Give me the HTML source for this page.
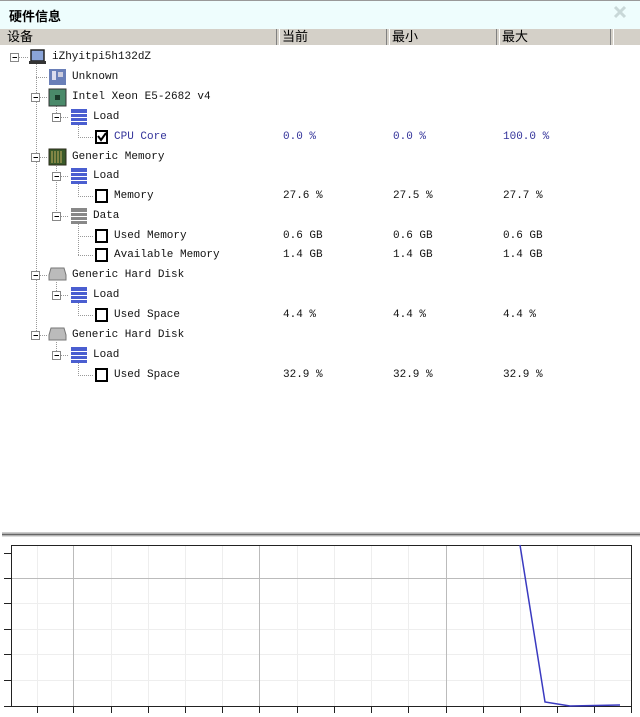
<!DOCTYPE html>
<html><head><meta charset="utf-8"><style>
body{margin:0;width:640px;height:717px;overflow:hidden;background:#fff;position:relative;font-family:"Liberation Mono","Noto Sans CJK SC",monospace;}
.title{position:absolute;left:0;top:0;width:640px;height:28px;background:#eefdfd;border-top:1px solid #999;}
.title span{position:absolute;left:9px;top:5px;font:bold 13px "Liberation Sans","Noto Sans CJK SC",sans-serif;color:#000;}
.hdr{position:absolute;left:0;top:29px;width:640px;height:16px;background:#d4d0c8;border-bottom:1px solid #fff;}
.hdr div{position:absolute;top:0;height:16px;font:13px "Liberation Sans","Noto Sans CJK SC",sans-serif;line-height:16px;color:#000;}
.sep{position:absolute;top:29px;width:2px;height:16px;border-left:1px solid #808080;border-right:1px solid #fff;}
.t{position:absolute;font-size:11px;line-height:14px;color:#111;white-space:pre;}
.b{color:#33339a;}
</style></head><body>
<div class="title"><span>硬件信息</span>
<svg style="position:absolute;left:612px;top:4px" width="16" height="14"><path d="M3 2L13 12M13 2L3 12" stroke="#c8d8d8" stroke-width="3"/></svg></div>
<div class="hdr"><div style="left:7px">设备</div><div style="left:282px">当前</div><div style="left:392px">最小</div><div style="left:502px">最大</div></div>
<div class="sep" style="left:276px"></div><div class="sep" style="left:386px"></div><div class="sep" style="left:496px"></div><div class="sep" style="left:610px"></div>

<svg style="position:absolute;left:0;top:0" width="640" height="400">
<g stroke="#999" stroke-dasharray="1,1" fill="none">
<line x1="36.5" y1="64" x2="36.5" y2="335"/>
<line x1="19" y1="57.5" x2="29" y2="57.5"/>
<line x1="36" y1="77.5" x2="48" y2="77.5"/>
<line x1="40" y1="97.5" x2="48" y2="97.5"/>
<line x1="40" y1="157.5" x2="48" y2="157.5"/>
<line x1="40" y1="275.5" x2="48" y2="275.5"/>
<line x1="40" y1="335.5" x2="48" y2="335.5"/>
<line x1="56.5" y1="104" x2="56.5" y2="117"/>
<line x1="56.5" y1="164" x2="56.5" y2="216"/>
<line x1="56.5" y1="282" x2="56.5" y2="295"/>
<line x1="56.5" y1="342" x2="56.5" y2="355"/>
<line x1="61" y1="117.5" x2="69" y2="117.5"/>
<line x1="61" y1="176.5" x2="69" y2="176.5"/>
<line x1="61" y1="216.5" x2="69" y2="216.5"/>
<line x1="61" y1="295.5" x2="69" y2="295.5"/>
<line x1="61" y1="355.5" x2="69" y2="355.5"/>
<line x1="78.5" y1="125" x2="78.5" y2="137"/><line x1="78" y1="137.5" x2="93" y2="137.5"/>
<line x1="78.5" y1="184" x2="78.5" y2="196"/><line x1="78" y1="196.5" x2="93" y2="196.5"/>
<line x1="78.5" y1="224" x2="78.5" y2="255"/><line x1="78" y1="236.5" x2="93" y2="236.5"/><line x1="78" y1="255.5" x2="93" y2="255.5"/>
<line x1="78.5" y1="303" x2="78.5" y2="315"/><line x1="78" y1="315.5" x2="93" y2="315.5"/>
<line x1="78.5" y1="363" x2="78.5" y2="375"/><line x1="78" y1="375.5" x2="93" y2="375.5"/>
</g>
<g fill="#fff" stroke="#888">
<rect x="10.5" y="53.5" width="8" height="8"/>
<rect x="31.5" y="93.5" width="8" height="8"/><rect x="31.5" y="153.5" width="8" height="8"/>
<rect x="31.5" y="271.5" width="8" height="8"/><rect x="31.5" y="331.5" width="8" height="8"/>
<rect x="52.5" y="113.5" width="8" height="8"/><rect x="52.5" y="172.5" width="8" height="8"/>
<rect x="52.5" y="212.5" width="8" height="8"/><rect x="52.5" y="291.5" width="8" height="8"/><rect x="52.5" y="351.5" width="8" height="8"/>
</g>
<g stroke="#000"><line x1="12.5" y1="57.5" x2="17" y2="57.5"/><line x1="33.5" y1="97.5" x2="38" y2="97.5"/><line x1="33.5" y1="157.5" x2="38" y2="157.5"/><line x1="33.5" y1="275.5" x2="38" y2="275.5"/><line x1="33.5" y1="335.5" x2="38" y2="335.5"/><line x1="54.5" y1="117.5" x2="59" y2="117.5"/><line x1="54.5" y1="176.5" x2="59" y2="176.5"/><line x1="54.5" y1="216.5" x2="59" y2="216.5"/><line x1="54.5" y1="295.5" x2="59" y2="295.5"/><line x1="54.5" y1="355.5" x2="59" y2="355.5"/></g>
<!-- root computer -->
<rect x="31" y="50" width="13" height="11" fill="#8aa4d8" stroke="#222" stroke-width="1.5"/><rect x="29" y="61" width="17" height="3" fill="#333"/>
<!-- unknown motherboard -->
<rect x="49" y="69" width="17" height="16" fill="#6a7fb8"/><rect x="52" y="71" width="4" height="9" fill="#dde"/><rect x="58" y="72" width="5" height="5" fill="#ccd"/>
<!-- cpu -->
<rect x="49" y="89" width="17" height="17" fill="#4a8a6a" stroke="#333"/><rect x="55" y="95" width="5" height="5" fill="#1a3a2a"/>
<!-- memory -->
<rect x="49" y="149" width="17" height="16" fill="#3a5a2a" stroke="#2a2a1a"/><g stroke="#c8b060"><line x1="52" y1="151" x2="52" y2="163"/><line x1="55" y1="151" x2="55" y2="163"/><line x1="58" y1="151" x2="58" y2="163"/><line x1="61" y1="151" x2="61" y2="163"/></g>
<!-- disks -->
<path d="M51 268h13l2 7v5h-17v-5z" fill="#bbb" stroke="#777"/><path d="M51 328h13l2 7v5h-17v-5z" fill="#bbb" stroke="#777"/>
<!-- load bars -->
<g fill="#4a5ed0"><rect x="71" y="109" width="16" height="16"/><rect x="71" y="168" width="16" height="16"/><rect x="71" y="287" width="16" height="16"/><rect x="71" y="347" width="16" height="16"/></g>
<rect x="71" y="208" width="16" height="16" fill="#888"/>
<g stroke="#fff" stroke-width="1"><path d="M71 113.5h16M71 117.5h16M71 121.5h16M71 172.5h16M71 176.5h16M71 180.5h16M71 212.5h16M71 216.5h16M71 220.5h16M71 291.5h16M71 295.5h16M71 299.5h16M71 351.5h16M71 355.5h16M71 359.5h16"/></g>
<!-- checkboxes -->
<g fill="#fff" stroke="#000" stroke-width="2"><rect x="96" y="131" width="11" height="12"/><rect x="96" y="190" width="11" height="12"/><rect x="96" y="230" width="11" height="12"/><rect x="96" y="249" width="11" height="12"/><rect x="96" y="309" width="11" height="12"/><rect x="96" y="369" width="11" height="12"/></g>
<path d="M98 136l3 4 5-7" stroke="#000" stroke-width="2" fill="none"/>
</svg>

<div class="t" style="left:52px;top:50px">iZhyitpi5h132dZ</div>
<div class="t" style="left:72px;top:70px">Unknown</div>
<div class="t" style="left:72px;top:90px">Intel Xeon E5-2682 v4</div>
<div class="t" style="left:93px;top:110px">Load</div>
<div class="t b" style="left:114px;top:130px">CPU Core</div><div class="t b" style="left:283px;top:130px">0.0 %</div><div class="t b" style="left:393px;top:130px">0.0 %</div><div class="t b" style="left:503px;top:130px">100.0 %</div>
<div class="t" style="left:72px;top:150px">Generic Memory</div>
<div class="t" style="left:93px;top:169px">Load</div>
<div class="t" style="left:114px;top:189px">Memory</div><div class="t" style="left:283px;top:189px">27.6 %</div><div class="t" style="left:393px;top:189px">27.5 %</div><div class="t" style="left:503px;top:189px">27.7 %</div>
<div class="t" style="left:93px;top:209px">Data</div>
<div class="t" style="left:114px;top:229px">Used Memory</div><div class="t" style="left:283px;top:229px">0.6 GB</div><div class="t" style="left:393px;top:229px">0.6 GB</div><div class="t" style="left:503px;top:229px">0.6 GB</div>
<div class="t" style="left:114px;top:248px">Available Memory</div><div class="t" style="left:283px;top:248px">1.4 GB</div><div class="t" style="left:393px;top:248px">1.4 GB</div><div class="t" style="left:503px;top:248px">1.4 GB</div>
<div class="t" style="left:72px;top:268px">Generic Hard Disk</div>
<div class="t" style="left:93px;top:288px">Load</div>
<div class="t" style="left:114px;top:308px">Used Space</div><div class="t" style="left:283px;top:308px">4.4 %</div><div class="t" style="left:393px;top:308px">4.4 %</div><div class="t" style="left:503px;top:308px">4.4 %</div>
<div class="t" style="left:72px;top:328px">Generic Hard Disk</div>
<div class="t" style="left:93px;top:348px">Load</div>
<div class="t" style="left:114px;top:368px">Used Space</div><div class="t" style="left:283px;top:368px">32.9 %</div><div class="t" style="left:393px;top:368px">32.9 %</div><div class="t" style="left:503px;top:368px">32.9 %</div>

<svg style="position:absolute;left:0;top:525px" width="640" height="192">
<rect x="0" y="0" width="640" height="192" fill="#fff"/>
<line x1="2" y1="7.5" x2="640" y2="7.5" stroke="#ccc"/>
<line x1="2" y1="9.5" x2="640" y2="9.5" stroke="#666" stroke-width="2"/>
<line x1="2" y1="11.5" x2="640" y2="11.5" stroke="#ddd"/>
<g stroke="#eee">
<path d="M37.5 20v162M111.5 20v162M148.5 20v162M185.5 20v162M222.5 20v162M297.5 20v162M334.5 20v162M371.5 20v162M408.5 20v162M483.5 20v162M520.5 20v162M557.5 20v162M594.5 20v162"/>
<path d="M11 78.5h620M11 104.5h620M11 129.5h620M11 155.5h620"/>
</g>
<g stroke="#bbb"><path d="M73.5 20v162M259.5 20v162M446.5 20v162M11 53.5h620"/></g>
<rect x="11.5" y="20.5" width="620" height="161" fill="none" stroke="#222"/>
<g stroke="#222"><path d="M4 28.5h7M4 53.5h7M4 78.5h7M4 104.5h7M4 129.5h7M4 155.5h7M4 181.5h7"/>
<path d="M37.5 182v6M73.5 182v6M111.5 182v6M148.5 182v6M185.5 182v6M222.5 182v6M259.5 182v6M297.5 182v6M334.5 182v6M371.5 182v6M408.5 182v6M446.5 182v6M483.5 182v6M520.5 182v6M557.5 182v6M594.5 182v6M631.5 182v6"/></g>
<polyline points="520,20 545,177 570,181 620,180" fill="none" stroke="#3a3ac0" stroke-width="1.5"/>
</svg>
</body></html>
